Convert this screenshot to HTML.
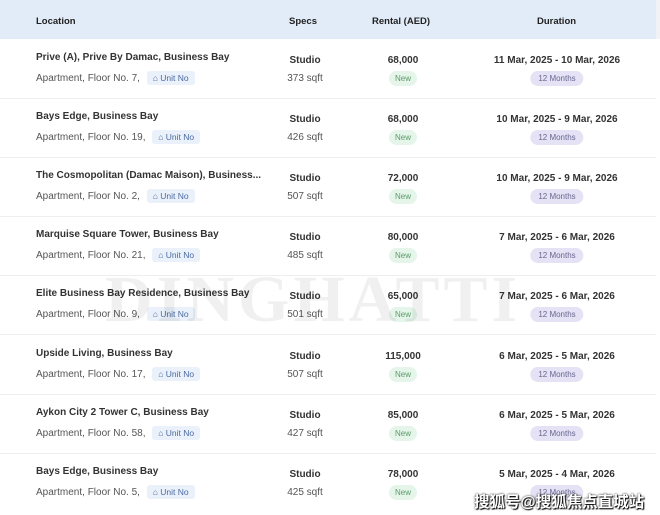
<!DOCTYPE html>
<html><head><meta charset="utf-8"><style>
body{margin:0;width:660px;height:515px;background:#fff;font-family:"Liberation Sans",sans-serif;overflow:hidden;position:relative;color:#333}
.hd{position:absolute;left:0;top:0;width:656px;height:39px;background:#e2ecf8;border-right:4px solid #f0f2f5}
.hd span{position:absolute;top:16px;font-size:9.5px;font-weight:bold;color:#222}
.row{position:absolute;left:0;width:656px;height:58px;border-bottom:1.5px solid #eceef1}
.t{position:absolute;left:36px;top:12px;font-size:10px;font-weight:bold;color:#333}
.s{position:absolute;left:36px;top:31px;font-size:10px;color:#555}
.u{display:inline-block;background:#eaf1fb;color:#4a6aa0;font-size:8.5px;padding:2px 6px;border-radius:3px;margin-left:4px}
.c{position:absolute;text-align:center;transform:translateX(-50%);white-space:nowrap}
.b{font-size:10px;font-weight:bold;color:#333;top:15px}
.n{font-size:10px;color:#555;top:33px}
.new{top:31px;font-size:8px;color:#5a9a6a;background:#e5f5ea;padding:3px 6px;border-radius:8px}
.mo{top:31px;font-size:8px;color:#6a6690;background:#e4e2f4;padding:3px 8px;border-radius:8px}
.wm{position:absolute;left:105px;top:262px;font-size:66px;font-weight:bold;color:rgba(0,0,0,0.06);letter-spacing:4px;font-family:"Liberation Serif",serif}
.cn{position:absolute;left:474px;top:490px;font-size:15.5px;font-weight:bold;color:#fff;white-space:nowrap;text-shadow:0 0 2px #000,1px 1px 1px #000;font-family:"Liberation Sans","Noto Sans CJK SC",sans-serif}
</style></head><body>
<div class="hd"><span style="left:36px">Location</span><span style="left:289px">Specs</span><span style="left:372px">Rental (AED)</span><span style="left:537px">Duration</span></div>

<div class="row" style="top:40px"><div class="t">Prive (A), Prive By Damac, Business Bay</div><div class="s">Apartment, Floor No. 7, <span class="u">⌂ Unit No</span></div><div class="c b" style="left:305px">Studio</div><div class="c n" style="left:305px">373 sqft</div><div class="c b" style="left:403px">68,000</div><div class="c new" style="left:403px">New</div><div class="c b" style="left:557px">11 Mar, 2025 - 10 Mar, 2026</div><div class="c mo" style="left:557px">12 Months</div></div>

<div class="row" style="top:99px"><div class="t">Bays Edge, Business Bay</div><div class="s">Apartment, Floor No. 19, <span class="u">⌂ Unit No</span></div><div class="c b" style="left:305px">Studio</div><div class="c n" style="left:305px">426 sqft</div><div class="c b" style="left:403px">68,000</div><div class="c new" style="left:403px">New</div><div class="c b" style="left:557px">10 Mar, 2025 - 9 Mar, 2026</div><div class="c mo" style="left:557px">12 Months</div></div>

<div class="row" style="top:158px"><div class="t">The Cosmopolitan (Damac Maison), Business...</div><div class="s">Apartment, Floor No. 2, <span class="u">⌂ Unit No</span></div><div class="c b" style="left:305px">Studio</div><div class="c n" style="left:305px">507 sqft</div><div class="c b" style="left:403px">72,000</div><div class="c new" style="left:403px">New</div><div class="c b" style="left:557px">10 Mar, 2025 - 9 Mar, 2026</div><div class="c mo" style="left:557px">12 Months</div></div>

<div class="row" style="top:217px"><div class="t">Marquise Square Tower, Business Bay</div><div class="s">Apartment, Floor No. 21, <span class="u">⌂ Unit No</span></div><div class="c b" style="left:305px">Studio</div><div class="c n" style="left:305px">485 sqft</div><div class="c b" style="left:403px">80,000</div><div class="c new" style="left:403px">New</div><div class="c b" style="left:557px">7 Mar, 2025 - 6 Mar, 2026</div><div class="c mo" style="left:557px">12 Months</div></div>

<div class="row" style="top:276px"><div class="t">Elite Business Bay Residence, Business Bay</div><div class="s">Apartment, Floor No. 9, <span class="u">⌂ Unit No</span></div><div class="c b" style="left:305px">Studio</div><div class="c n" style="left:305px">501 sqft</div><div class="c b" style="left:403px">65,000</div><div class="c new" style="left:403px">New</div><div class="c b" style="left:557px">7 Mar, 2025 - 6 Mar, 2026</div><div class="c mo" style="left:557px">12 Months</div></div>

<div class="row" style="top:336px"><div class="t">Upside Living, Business Bay</div><div class="s">Apartment, Floor No. 17, <span class="u">⌂ Unit No</span></div><div class="c b" style="left:305px">Studio</div><div class="c n" style="left:305px">507 sqft</div><div class="c b" style="left:403px">115,000</div><div class="c new" style="left:403px">New</div><div class="c b" style="left:557px">6 Mar, 2025 - 5 Mar, 2026</div><div class="c mo" style="left:557px">12 Months</div></div>

<div class="row" style="top:395px"><div class="t">Aykon City 2 Tower C, Business Bay</div><div class="s">Apartment, Floor No. 58, <span class="u">⌂ Unit No</span></div><div class="c b" style="left:305px">Studio</div><div class="c n" style="left:305px">427 sqft</div><div class="c b" style="left:403px">85,000</div><div class="c new" style="left:403px">New</div><div class="c b" style="left:557px">6 Mar, 2025 - 5 Mar, 2026</div><div class="c mo" style="left:557px">12 Months</div></div>

<div class="row" style="top:454px;border-bottom:none"><div class="t">Bays Edge, Business Bay</div><div class="s">Apartment, Floor No. 5, <span class="u">⌂ Unit No</span></div><div class="c b" style="left:305px">Studio</div><div class="c n" style="left:305px">425 sqft</div><div class="c b" style="left:403px">78,000</div><div class="c new" style="left:403px">New</div><div class="c b" style="left:557px">5 Mar, 2025 - 4 Mar, 2026</div><div class="c mo" style="left:557px">12 Months</div></div>

<div class="wm">DINGHATTI</div>
<div class="cn">搜狐号@搜狐焦点直城站</div>
</body></html>
